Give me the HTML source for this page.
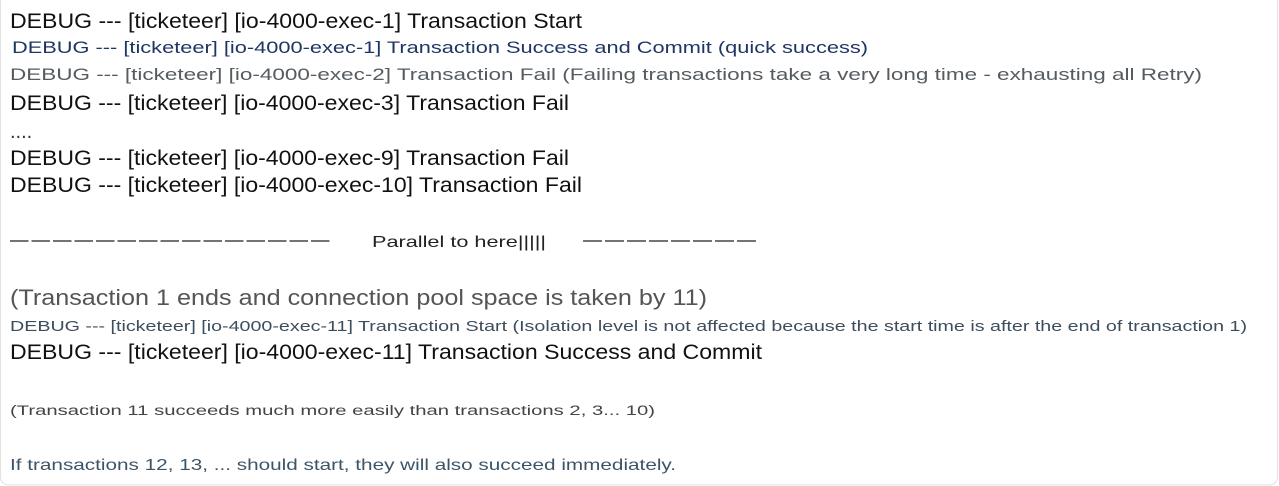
<!DOCTYPE html>
<html><head><meta charset="utf-8"><style>
html,body{margin:0;padding:0;background:#fff;width:1279px;height:486px;overflow:hidden}
svg{display:block}
text{font-family:"Liberation Sans",Arial,sans-serif}
</style></head><body>
<svg width="1279" height="486" xmlns="http://www.w3.org/2000/svg">
<rect x="0.5" y="-10" width="1277" height="495" rx="8" fill="#fff" stroke="#e2e2e2"/>
<text x="10" y="28" font-size="21" fill="#111" textLength="572" lengthAdjust="spacingAndGlyphs">DEBUG --- [ticketeer] [io-4000-exec-1] Transaction Start</text>
<text x="12" y="53" font-size="17" fill="#1f3563" textLength="856" lengthAdjust="spacingAndGlyphs">DEBUG --- [ticketeer] [io-4000-exec-1] Transaction Success and Commit (quick success)</text>
<text x="10" y="80" font-size="17" fill="#555b5f" textLength="1192" lengthAdjust="spacingAndGlyphs">DEBUG --- [ticketeer] [io-4000-exec-2] Transaction Fail (Failing transactions take a very long time - exhausting all Retry)</text>
<text x="10" y="110" font-size="21" fill="#111" textLength="559" lengthAdjust="spacingAndGlyphs">DEBUG --- [ticketeer] [io-4000-exec-3] Transaction Fail</text>
<text x="10" y="138" font-size="20" fill="#333">....</text>
<text x="10" y="165" font-size="21" fill="#111" textLength="559" lengthAdjust="spacingAndGlyphs">DEBUG --- [ticketeer] [io-4000-exec-9] Transaction Fail</text>
<text x="10" y="192" font-size="21" fill="#111" textLength="572" lengthAdjust="spacingAndGlyphs">DEBUG --- [ticketeer] [io-4000-exec-10] Transaction Fail</text>
<g stroke="#222" stroke-width="1.3">
<line x1="10" y1="241" x2="330" y2="241" stroke-dasharray="18.5,3"/>
<line x1="583" y1="241" x2="756" y2="241" stroke-dasharray="19,3"/>
</g>
<text x="372" y="247" font-size="16" fill="#222" textLength="174" lengthAdjust="spacingAndGlyphs">Parallel to here|||||</text>
<text x="10" y="305" font-size="22" fill="#555" textLength="697" lengthAdjust="spacingAndGlyphs">(Transaction 1 ends and connection pool space is taken by 11)</text>
<text x="10" y="331" font-size="15" fill="#3d4d5c" textLength="1237" lengthAdjust="spacingAndGlyphs">DEBUG --- [ticketeer] [io-4000-exec-11] Transaction Start (Isolation level is not affected because the start time is after the end of transaction 1)</text>
<text x="10" y="359" font-size="21" fill="#111" textLength="752" lengthAdjust="spacingAndGlyphs">DEBUG --- [ticketeer] [io-4000-exec-11] Transaction Success and Commit</text>
<text x="10" y="415" font-size="13.5" fill="#444" textLength="645" lengthAdjust="spacingAndGlyphs">(Transaction 11 succeeds much more easily than transactions 2, 3... 10)</text>
<text x="10" y="470" font-size="16" fill="#3d5466" textLength="666" lengthAdjust="spacingAndGlyphs">If transactions 12, 13, ... should start, they will also succeed immediately.</text>
</svg>
</body></html>
